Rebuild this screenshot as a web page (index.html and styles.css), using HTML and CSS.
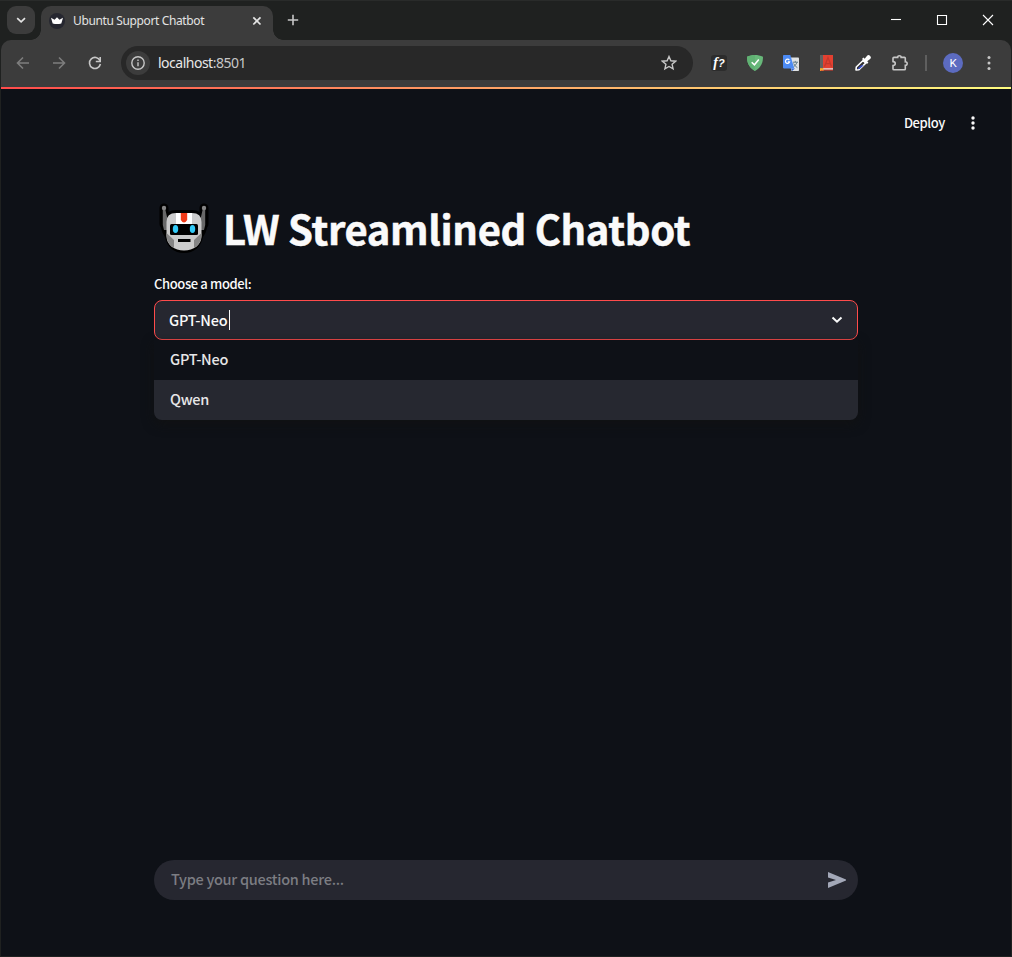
FILE: index.html
```html
<!DOCTYPE html>
<html lang="en">
<head>
<meta charset="utf-8">
<title>Ubuntu Support Chatbot</title>
<link rel="stylesheet" href="styles.css">
</head>
<body>
<div class="window">
  <header class="titlebar">
    <button class="tab-search" aria-label="Search tabs"><svg width="28" height="28" viewBox="0 0 28 28"><path d="M10.200 12.200l3.900 3.700 3.900-3.700" class="line bright"/></svg></button>
    <div class="tab">
      <svg class="favicon" width="16" height="16" viewBox="0 0 16 16"><circle cx="8" cy="8" r="8" fill="#262730"/><path d="M2 4.800l3.500 2L8 4.300l2.500 2.500 3.500-2-1.700 5.700q-4.300 1.200-8.600 0z" fill="#fff"/></svg>
      <span class="tab-title">Ubuntu Support Chatbot</span>
      <svg class="tab-close" width="10" height="10" viewBox="0 0 10 10"><path d="M1.3 1.3l7.2 7.2m0-7.2L1.3 8.500" class="line bright"/></svg>
    </div>
    <svg class="new-tab" width="12" height="12" viewBox="0 0 12 12"><path d="M6 .8v10.400M.8 6h10.400" class="line"/></svg>
    <div class="controls">
      <svg width="46" height="40" viewBox="0 0 46 40"><path d="M18 19.500h10" class="win"/></svg>
      <svg width="46" height="40" viewBox="0 0 46 40"><path d="M18.500 15.500h9v9h-9z" class="win"/></svg>
      <svg width="46" height="40" viewBox="0 0 46 40"><path d="M18 15l10 10m0-10L18 25" class="win"/></svg>
    </div>
  </header>
  <div class="toolbar">
    <nav class="nav">
      <svg width="16" height="16" viewBox="0 0 16 16"><path d="M14 8H2.500M8 2.500L2.500 8 8 13.500" class="line dim"/></svg>
      <svg width="16" height="16" viewBox="0 0 16 16"><path d="M2 8h11.500M8 2.500l5.500 5.500L8 13.500" class="line dim"/></svg>
      <svg width="16" height="16" viewBox="0 0 16 16"><path d="M13 5.600A5.500 5.500 0 1 0 13.400 9" class="line"/><path d="M13.200 2v4.500H8.800" class="line"/></svg>
    </nav>
    <div class="omnibox">
      <svg class="info" width="24" height="24" viewBox="0 0 24 24"><circle cx="12" cy="12" r="12" fill="#3c3c3c"/><circle cx="12" cy="12" r="6.200" class="line thin"/><path d="M12 11.300v3.900M12 8.500v1.500" class="line thin"/></svg>
      <span class="url">localhost<span class="port">:8501</span></span>
      <svg class="star" width="16" height="16" viewBox="0 0 16 16"><path d="M8 1.500l1.900 4.300 4.700.4-3.500 3.100 1 4.600L8 11.500l-4.100 2.400 1-4.600-3.500-3.100 4.700-.4z" class="line thin"/></svg>
    </div>
    <div class="extensions">
      <span class="whatfont"><em>f</em>?</span>
      <svg width="16" height="16" viewBox="0 0 16 16"><path d="M8 0c2.500 0 5.500.6 8 1.700 0 5.800-1.500 10.300-8 14.300C1.500 12 0 7.500 0 1.700 2.500.6 5.500 0 8 0z" fill="#68b87a"/><path d="M8 0v16C1.500 12 0 7.500 0 1.700 2.500.6 5.500 0 8 0z" fill="#60b173"/><path d="M4.700 7.200l2.700 2.600 4.400-5.200" fill="none" stroke="#fff" stroke-width="1.500"/></svg>
      <svg width="16" height="16" viewBox="0 0 16 16"><path d="M5 2.500h10.200q.8 0 .8.800V15.200q0 .8-.8.800H8.500z" fill="#dfe2e4"/><path d="M8 13.400h4L9 16z" fill="#3367d6"/><path d="M.8 0h6.500l4 13.400H.8q-.8 0-.8-.8V.8Q0 0 .8 0z" fill="#4c8bf5"/><path d="M6.300 5.100a2.100 2.100 0 1 0 .3 1.700H4.800" stroke="#fff" stroke-width="1.200" fill="none"/><path d="M10 7.200h5M12.300 5.900v1.300M14 7.300q-1 3-3.200 4.300M10.600 8.500q1.500 3 3.800 4.200" stroke="#607d8b" fill="none"/></svg>
      <svg width="16" height="16" viewBox="0 0 16 16"><path d="M1 0h13v16H1z" fill="#e34030"/><path d="M1 0h3v13H1z" fill="#616161"/><path d="M4 13.300h10v1.400H4z" fill="#eee"/><path d="M4 14.700h10V16H4z" fill="#8f3a32"/><path d="M1 13.200h3.500V16L3 14.900 1 16z" fill="#f0b62b"/><path d="M5.500 11.500L9 2.500l3.500 9M7 8.600h4" fill="none" stroke="#c4382c" stroke-width="1.300"/></svg>
      <svg class="wide" width="18" height="18" viewBox="0 0 18 18"><path d="M2 16l.3-3 6.800-6.500 2.600 2.600-6.800 6.600z" fill="#303030" stroke="#fff" stroke-width="1.600" stroke-linejoin="round"/><path d="M3.500 14.800l3.600-3.600h2.700l-4.200 3.900z" fill="#3c50c8"/><path d="M8 5l1.400-1.400 1.300 1.200 2.200-2.900c1.200-1.200 2.200-1 3.200 0s1.200 2 0 3.200l-2.900 2.200 1.200 1.300L13 10z" fill="#fff"/></svg>
      <svg class="wide puzzle" width="18" height="18" viewBox="0 0 18 18"><path d="M2 4.300q0-.9.900-.9h3.800c-.2-2.300 3.600-2.300 3.400 0h3.300q.9 0 .9.900v3.500c2.500-.1 2.500 3.700 0 3.600v3.500q0 .9-.9.900H2.900q-.9 0-.9-.9v-3.300c3-.2 3-3.900 0-4z" class="line"/></svg>
    </div>
    <i class="divider"></i>
    <span class="avatar">K</span>
    <svg class="browser-menu" width="4" height="16" viewBox="0 0 4 16"><g fill="#c7c7c7"><circle cx="2" cy="2.500" r="1.500"/><circle cx="2" cy="8" r="1.500"/><circle cx="2" cy="13.500" r="1.500"/></g></svg>
  </div>
  <main class="app">
    <div class="decoration"></div>
    <div class="app-header"><span class="deploy">Deploy</span><svg width="4" height="16" viewBox="0 0 4 16"><g fill="#fafafa"><circle cx="2" cy="3" r="1.700"/><circle cx="2" cy="8" r="1.700"/><circle cx="2" cy="13" r="1.700"/></g></svg></div>
    <section class="content">
      <h1 class="heading">
        <svg class="robot" width="50" height="50" viewBox="0 0 50 50">
          <path d="M5 5v16M45 5v16" stroke="#000" stroke-width="9" stroke-linecap="round"/>
          <path d="M5 15Q8 7 17 7h16q9 0 12 8 4 3 3 10-1 5-4 9c-2 10-9 16-19 16S8 44 6 34q-3-4-4-9-1-7 3-10z" fill="#000"/>
          <path d="M3.800 6h2.400L8.500 16V27H5l-1.200-5zM46.200 6h-2.400L41.500 16v11H45l1.200-5z" fill="#686868"/>
          <circle cx="5" cy="5" r="2.200" fill="#858585"/><circle cx="45" cy="5" r="2.200" fill="#858585"/>
          <g transform="translate(0 1)">
            <path d="M7.500 18Q7.500 9 17 9h16q9.500 0 9.500 9v14c0 9-8 14.500-17.500 14.500S7.500 41 7.500 32z" fill="#cbcbcb"/>
            <path d="M7.500 29l7.500 7v8q-7-4-7.500-12zM42.500 29L35 36v8q7-4 7.500-12z" fill="#858585"/>
            <path d="M17 9h16v11.500H17z" fill="#fff"/><path d="M21.800 9h6.400v7q-3.200 5-6.400 0z" fill="#f03a17"/>
            <rect x="11" y="20" width="28" height="11" rx="1.500" fill="#000"/>
            <ellipse cx="16.500" cy="25" rx="2.700" ry="4" fill="#32caf7"/><ellipse cx="33.500" cy="25" rx="2.700" ry="4" fill="#32caf7"/>
            <path d="M19 35h12.500v3H19z" fill="#000"/>
          </g>
        </svg>
        <span class="heading-text">LW Streamlined Chatbot</span>
      </h1>
      <div class="label">Choose a model:</div>
      <div class="select"><span class="value">GPT-Neo</span><i class="caret"></i><svg width="12" height="8" viewBox="0 0 12 8"><path d="M1.500 1.500L6 5.700l4.500-4.200" fill="none" stroke="#fafafa" stroke-width="2"/></svg></div>
      <div class="menu"><div class="option">GPT-Neo</div><div class="option active">Qwen</div></div>
    </section>
    <div class="chat-input"><span class="placeholder">Type your question here...</span><svg width="18" height="16" viewBox="0 0 18 16"><path d="M0 0l18 7.500v1L0 16v-5.500L8 8 0 5.500z" fill="#a3a8b8"/></svg></div>
  </main>
</div>
</body>
</html>
```
FILE: styles.css
```css
* { box-sizing: border-box; }
body { margin: 0; background: #1f2120; overflow: hidden; }
svg { display: block; flex: none; }
.window { width: 1012px; height: 957px; padding: 0 1px 1px; display: flex; flex-direction: column; border-top: 1px solid #292b2a; background: #1f2120; }
.line { fill: none; stroke: #c7c7c7; stroke-width: 1.6; }
.line.thin { stroke-width: 1.4; }
.line.bright { stroke: #e3e3e3; stroke-width: 1.7; }
.line.dim { stroke: #7d7d7d; }
.win { fill: none; stroke: #fff; stroke-width: 1.1; }

.titlebar { height: 39px; display: flex; padding-left: 6px; }
.tab-search { width: 28px; height: 28px; margin-top: 5px; padding: 0; border: 0; border-radius: 9px; background: #3c3c3c; }
.tab { position: relative; width: 232px; height: 34px; margin: 5px 0 0 6px; padding: 0 11px 4px 8px; border-radius: 10px 10px 0 0; background: #3c3c3c; display: flex; align-items: center; }
.tab::before, .tab::after { content: ""; position: absolute; bottom: 0; width: 10px; height: 10px; }
.tab::before { right: 100%; background: radial-gradient(circle at 0 0, transparent 9.5px, #3c3c3c 10px); }
.tab::after { left: 100%; background: radial-gradient(circle at 100% 0, transparent 9.5px, #3c3c3c 10px); }
.tab-title { margin-left: 8px; font: 12px/16px "Noto Sans", sans-serif; letter-spacing: -0.37px; color: #e3e3e3; white-space: nowrap; }
.tab-close { margin-left: auto; }
.new-tab { margin: 13px 0 0 14px; }
.controls { display: flex; margin: -1px 0 0 auto; }

.toolbar { height: 47px; flex: none; display: flex; align-items: center; background: #3c3c3c; border-radius: 10px 10px 0 0; padding: 0 20px 2px 0; }
.nav { display: flex; gap: 20px; margin-left: 14px; }
.omnibox { width: 572px; height: 34px; margin: 0 0 0 18px; padding: 0 16px 0 5px; border-radius: 17px; background: #282828; display: flex; align-items: center; }
.url { margin-left: 8px; font: 14px/20px "Noto Sans", sans-serif; letter-spacing: -0.5px; color: #e8e8e8; }
.port { color: #c7c7c7; }
.star { margin-left: auto; }
.extensions { display: flex; align-items: center; gap: 20px; margin-left: 18px; }
.extensions .wide { margin: 0 -1px; }
.extensions .puzzle { margin: 0 -1px 0 0; }
.whatfont { width: 16px; height: 16px; border-radius: 3px; background: #2c2c2c; color: #fff; font: italic bold 11px/16px "Liberation Sans", sans-serif; text-align: center; white-space: nowrap; }
.whatfont em { font: italic bold 14px/14px "Liberation Serif", serif; }
.divider { width: 2px; height: 16px; background: #5f5f5f; margin-left: 17px; }
.avatar { width: 20px; height: 20px; margin-left: 16px; border-radius: 50%; background: #5c6bc0; color: #fff; font: 11.5px/20px Roboto, sans-serif; text-align: center; }
.browser-menu { margin-left: auto; }

.app { flex: 1; display: flex; flex-direction: column; background: #0e1117; color: #fafafa; font-family: "Noto Sans CJK JP", sans-serif; }
.decoration { height: 2px; background: linear-gradient(90deg, #ff4b4b, #fffd80); }
.app-header { height: 68px; display: flex; align-items: center; justify-content: flex-end; gap: 26px; padding-right: 36px; }
.deploy { font-size: 13px; font-weight: 500; line-height: 20px; letter-spacing: -0.4px; }
.content { width: 704px; margin: 0 auto; padding-top: 44px; }
.heading { margin: 0; display: flex; align-items: center; height: 54px; }
.robot { margin-left: 5px; }
.heading-text { margin-left: 14px; font-size: 40px; line-height: 54px; font-weight: 700; letter-spacing: -0.36px; -webkit-text-stroke: 0.5px #fafafa; white-space: nowrap; }
.label { margin-top: 19px; height: 26px; font-size: 13px; line-height: 20px; font-weight: 500; letter-spacing: -0.37px; }
.select { height: 40px; border: 1px solid #ff4b4b; border-radius: 8px; background: #262730; display: flex; align-items: center; padding: 0 14px; font-size: 14.5px; line-height: 38px; font-weight: 500; letter-spacing: -0.2px; }
.value { height: 38px; }
.caret { width: 1px; height: 20px; margin-left: 2px; background: #fafafa; }
.select svg { margin-left: auto; }
.menu { height: 80px; border-radius: 0 0 8px 8px; overflow: hidden; box-shadow: 0 4px 12px rgba(18, 18, 18, .8); }
.option { height: 40px; padding-left: 16px; font-size: 14.5px; font-weight: 500; line-height: 38px; letter-spacing: -0.25px; color: #e6e6e7; background: #0e1117; }
.option.active { background: #262830; }
.chat-input { width: 704px; height: 40px; margin: auto auto 56px; border-radius: 20px; padding: 0 12px 0 17px; background: #262730; display: flex; align-items: center; justify-content: space-between; font-size: 14.5px; letter-spacing: -0.28px; color: #7c7d83; font-weight: 500; }
.placeholder { line-height: 38px; height: 40px; }
```
